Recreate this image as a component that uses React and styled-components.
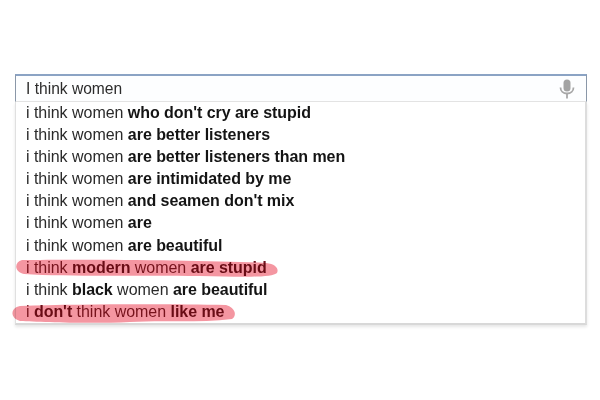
import React from "react";
import styled, { createGlobalStyle } from "styled-components";

const GlobalStyle = createGlobalStyle`
  html, body {
    margin: 0;
    padding: 0;
    background: #ffffff;
  }
  body {
    font-family: "Liberation Sans", Arial, sans-serif;
  }
`;

const Page = styled.div`
  position: relative;
  width: 600px;
  height: 400px;
  padding: 74px 13px 0 15px;
  box-sizing: border-box;
  overflow: hidden;
  color: #222222;
`;

const SearchBox = styled.div`
  height: 28px;
  display: flex;
  align-items: center;
  justify-content: space-between;
  padding: 0 11px 0 10px;
  box-sizing: border-box;
  border: 1px solid #8a97a8;
  border-top: 2px solid #8ba3c4;
  border-bottom: 1px solid #e4e4e4;
  background: #fdfeff;
  font-size: 15.6px;
  color: #2c2c2c;
`;

const Suggestions = styled.ul`
  list-style: none;
  margin: 0;
  padding: 0 0 0 10px;
  height: 221px;
  border: 1px solid #e0e0e0;
  border-top: 0;
  border-right: 2px solid #dddddd;
  border-bottom: 2px solid #d8d8d8;
  box-shadow: 0 2px 3px rgba(0, 0, 0, 0.1);
`;

const Row = styled.li`
  height: 22.1px;
  line-height: 22.5px;
  font-size: 16px;
  white-space: nowrap;
  color: ${(p) => (p.$marked ? "#7c1f2c" : "#2a2a2a")};

  span {
    letter-spacing: -0.03px;
  }

  b {
    color: ${(p) => (p.$marked ? "#6e1420" : "#141414")};
    letter-spacing: -0.05px;
  }
`;

const Scribbles = styled.svg`
  position: absolute;
  left: 0;
  top: 0;
  mix-blend-mode: multiply;
  pointer-events: none;
`;

const rows = [
  { parts: [["i think women "], ["who don't cry are stupid", 1]] },
  { parts: [["i think women "], ["are better listeners", 1]] },
  { parts: [["i think women "], ["are better listeners than men", 1]] },
  { parts: [["i think women "], ["are intimidated by me", 1]] },
  { parts: [["i think women "], ["and seamen don't mix", 1]] },
  { parts: [["i think women "], ["are", 1]] },
  { parts: [["i think women "], ["are beautiful", 1]] },
  { parts: [["i think "], ["modern", 1], [" women "], ["are stupid", 1]], marked: true },
  { parts: [["i think "], ["black", 1], [" women "], ["are beautiful", 1]] },
  { parts: [["i "], ["don't", 1], [" think women "], ["like me", 1]], marked: true },
];

function Mic() {
  return (
    <svg width="16" height="20" viewBox="0 0 16 20" fill="none">
      <rect x="4.5" y="0.5" width="7" height="12" rx="3.5" fill="#a3a3a3" />
      <path d="M1.5 8.5c0 3.6 2.8 6 6.5 6s6.5-2.4 6.5-6" stroke="#a8a8a8" strokeWidth="1.8" />
      <path d="M8 14.5v5" stroke="#a8a8a8" strokeWidth="1.8" />
    </svg>
  );
}

export default function App() {
  return (
    <Page>
      <GlobalStyle />
      <SearchBox>
        <span>I think women</span>
        <Mic />
      </SearchBox>
      <Suggestions>
        {rows.map((row, i) => (
          <Row key={i} $marked={row.marked}>
            {row.parts.map(([text, bold], j) => (bold ? <b key={j}>{text}</b> : <span key={j}>{text}</span>))}
          </Row>
        ))}
      </Suggestions>
      <Scribbles width="600" height="400" viewBox="0 0 600 400">
        <defs>
          <filter id="soft">
            <feGaussianBlur stdDeviation="0.6" />
          </filter>
        </defs>
        <path
          d="M22 260 C80 259 210 260 266 263 C276 264 279 269 277 273 C272 278 240 277 200 276 C140 275 70 277 24 274 C14 272 14 262 22 260 Z"
          fill="#f27c8a"
          opacity="0.8"
          filter="url(#soft)"
        />
        <path
          d="M20 306 C80 304 170 304 226 305 C236 308 237 316 232 319 C200 323 160 320 130 322 C90 324 40 322 20 321 C10 318 10 308 20 306 Z"
          fill="#f27c8a"
          opacity="0.8"
          filter="url(#soft)"
        />
      </Scribbles>
    </Page>
  );
}
